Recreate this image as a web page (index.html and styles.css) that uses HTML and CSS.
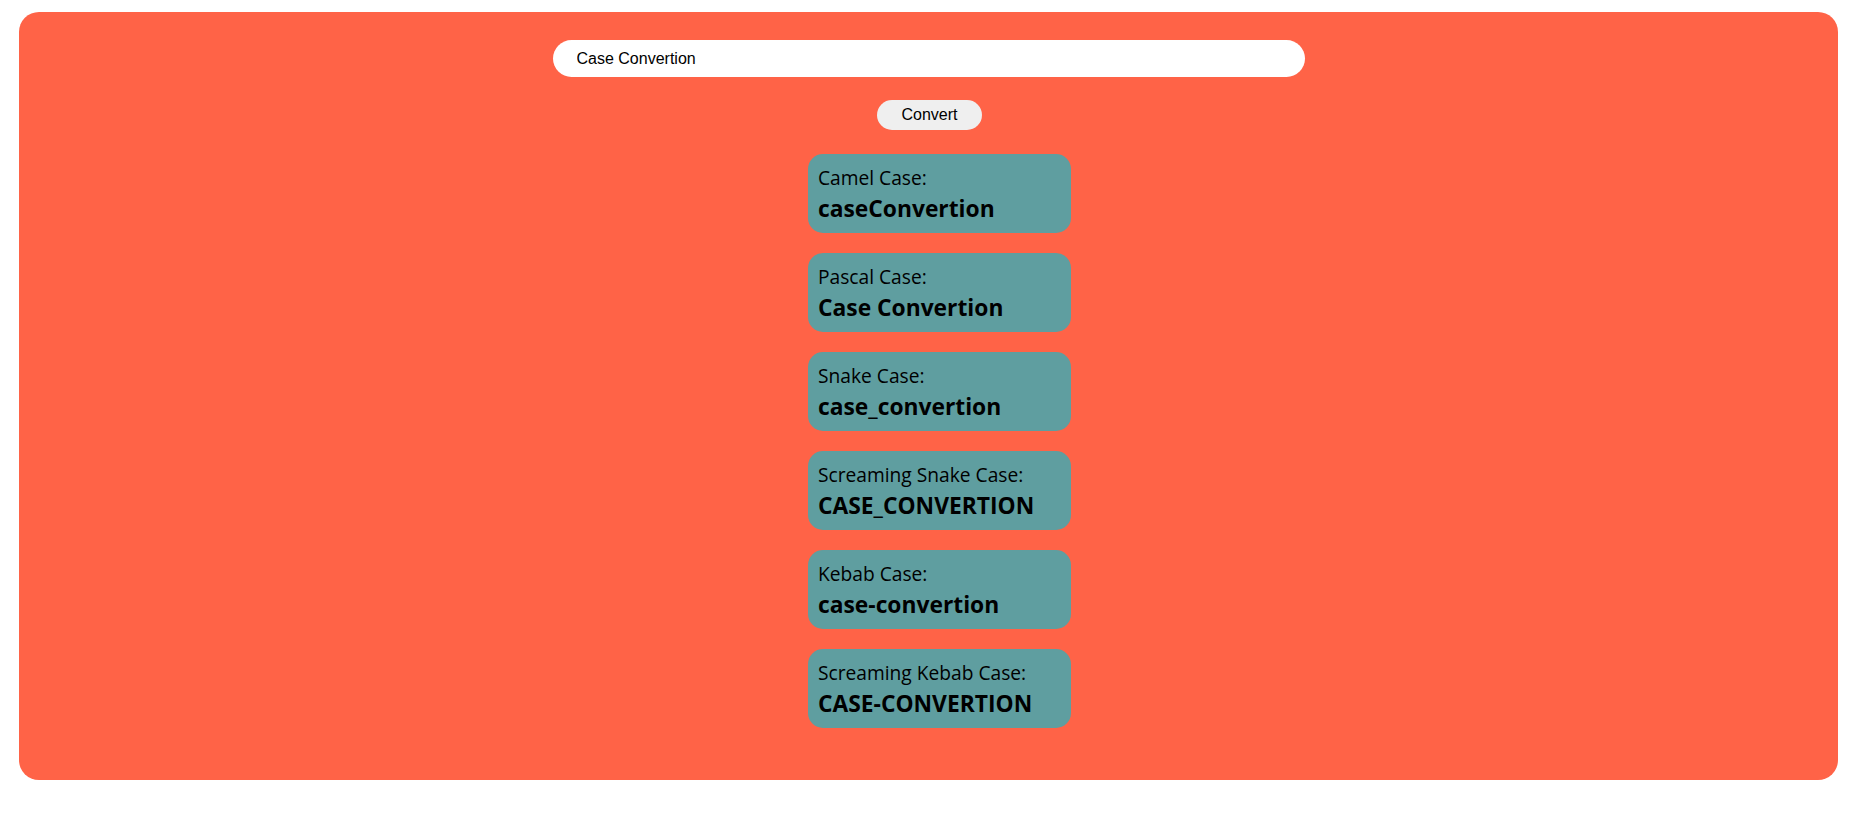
FILE: index.html
```html
<!DOCTYPE html>
<html>
<head>
<meta charset="utf-8">
<link rel="stylesheet" href="styles.css">
</head>
<body>
<div class="app">
  <input class="text-input" type="text" value="Case Convertion">
  <button class="convert-btn">Convert</button>
  <div class="results">
    <div class="card"><div class="label">Camel Case:</div><div class="value">caseConvertion</div></div>
    <div class="card"><div class="label">Pascal Case:</div><div class="value">Case Convertion</div></div>
    <div class="card"><div class="label">Snake Case:</div><div class="value">case_convertion</div></div>
    <div class="card"><div class="label">Screaming Snake Case:</div><div class="value">CASE_CONVERTION</div></div>
    <div class="card"><div class="label">Kebab Case:</div><div class="value">case-convertion</div></div>
    <div class="card"><div class="label">Screaming Kebab Case:</div><div class="value">CASE-CONVERTION</div></div>
  </div>
</div>
</body>
</html>
```

FILE: styles.css
```css
html, body {
  margin: 0;
  padding: 0;
  background: #ffffff;
}
body {
  padding: 12px 15px 0 19px;
}
.app {
  background: #ff6347;
  border-radius: 20px;
  height: 768px;
  box-sizing: border-box;
  padding-top: 28px;
  display: flex;
  flex-direction: column;
  align-items: center;
}
.text-input {
  width: 752px;
  height: 37px;
  box-sizing: border-box;
  border: none;
  outline: none;
  border-radius: 19px;
  padding: 0 24px;
  font-family: "Liberation Sans", Arial, sans-serif;
  font-size: 16px;
  color: #000;
  background: #fff;
}
.convert-btn {
  margin-top: 23px;
  margin-left: 2px;
  width: 105px;
  height: 30px;
  border: none;
  border-radius: 15px;
  background: #efefef;
  font-family: "Liberation Sans", Arial, sans-serif;
  font-size: 16px;
  color: #000;
  padding: 0;
}
.results {
  margin-top: 24px;
  margin-left: 22px;
  display: flex;
  flex-direction: column;
  gap: 20px;
}
.card {
  width: 263px;
  box-sizing: border-box;
  background: #5f9ea0;
  border-radius: 15px;
  padding: 10px;
  font-family: "Open Sans", "Noto Sans", sans-serif;
  color: #000;
}
.label {
  font-size: 19.2px;
  line-height: 28px;
}
.value {
  font-size: 22.8px;
  font-weight: 700;
  line-height: 31px;
  padding-top: 1px;
  margin-bottom: -1px;
}
```
